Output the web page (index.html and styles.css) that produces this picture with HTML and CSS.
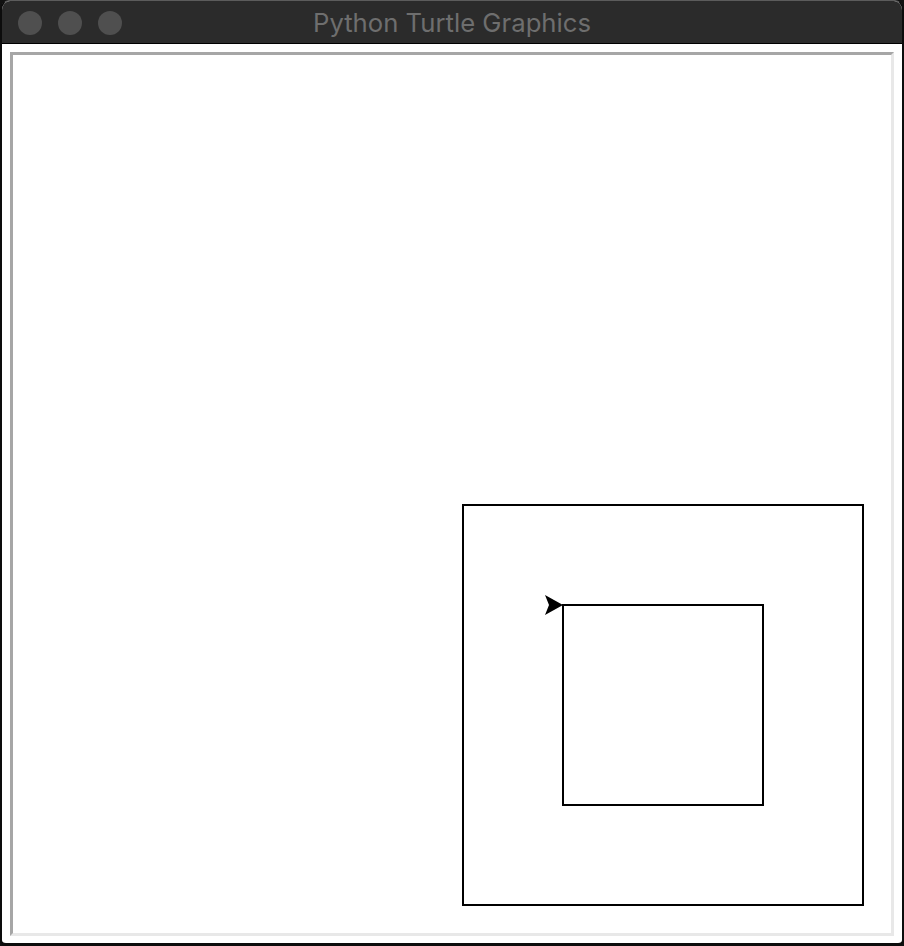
FILE: index.html
```html
<!DOCTYPE html>
<html>
<head>
<meta charset="utf-8">
<title>Python Turtle Graphics</title>
<link rel="stylesheet" href="styles.css">
</head>
<body>
<div class="window">
  <div class="titlebar">
    <div class="lights">
      <span class="light"></span>
      <span class="light"></span>
      <span class="light"></span>
    </div>
    <div class="title">Python Turtle Graphics</div>
  </div>
  <div class="content">
    <div class="frame">
      <svg class="canvas" width="878" height="878" viewBox="0 0 878 878">
        <rect x="450" y="450" width="400" height="400" fill="none" stroke="#000" stroke-width="2" shape-rendering="crispEdges"/>
        <rect x="550" y="550" width="200" height="200" fill="none" stroke="#000" stroke-width="2" shape-rendering="crispEdges"/>
        <polygon points="550,550 532,540 536,550 532,560" fill="#000"/>
      </svg>
    </div>
  </div>
</div>
</body>
</html>
```

FILE: styles.css
```css
html, body {
  margin: 0;
  padding: 0;
  background: #111;
}
.window {
  width: 904px;
  height: 946px;
  box-sizing: border-box;
  border-left: 2px solid #0c0c0c;
  border-right: 2px solid #0c0c0c;
  border-bottom: 3px solid #0c0c0c;
  border-top: 1px solid #5c5c5c;
  border-radius: 10px 10px 6px 6px;
  background: #fff;
  overflow: hidden;
  display: flex;
  flex-direction: column;
}
.titlebar {
  height: 42px;
  flex: none;
  background: #2b2b2b;
  border-bottom: 1px solid #000;
  position: relative;
  display: flex;
  align-items: center;
}
.lights {
  display: flex;
  gap: 16px;
  padding-left: 16px;
  margin-top: 1px;
}
.light {
  width: 24px;
  height: 24px;
  border-radius: 50%;
  background: #4f4f4f;
}
.title {
  position: absolute;
  left: 0;
  right: 0;
  top: 0;
  bottom: 0;
  display: flex;
  align-items: center;
  justify-content: center;
  font-family: Inter, "Liberation Sans", sans-serif;
  font-size: 25.7px;
  color: #6e6e6e;
}
.content {
  flex: 1;
  padding: 8px 8px 7px 8px;
}
.frame {
  width: 884px;
  height: 884px;
  box-sizing: border-box;
  border-style: solid;
  border-width: 3px;
  border-color: #a6a6a6 #e8e8e8 #e8e8e8 #a6a6a6;
  background: #fff;
}
.canvas {
  display: block;
}
```
